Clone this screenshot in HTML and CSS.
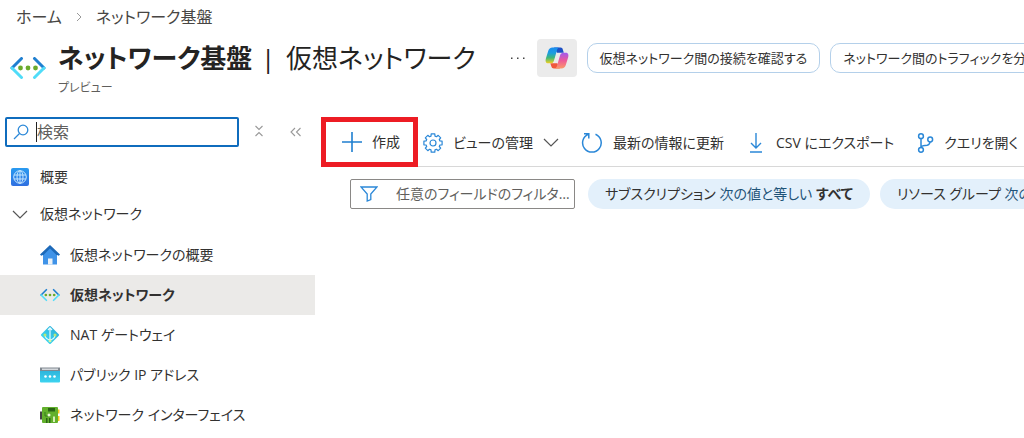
FILE: index.html
```html
<!DOCTYPE html>
<html lang="ja">

<head>
    <meta charset="UTF-8">
    <meta name="viewport" content="width=device-width, initial-scale=1.0">
    <title>ネットワーク基盤 | 仮想ネットワーク</title>
    <link rel="stylesheet" href="styles.css">
</head>

<body>

    <!-- 共通グラデーションとアイコン -->
    <svg class="defs" width="0" height="0" aria-hidden="true">
        <defs>
            <linearGradient id="g-blue" x1="0" y1="0" x2="0" y2="1">
                <stop offset="0" stop-color="#2a9bf0"/>
                <stop offset="1" stop-color="#2f6fe0"/>
            </linearGradient>
            <linearGradient id="g-cyan" x1="0" y1="0" x2="0" y2="1">
                <stop offset="0" stop-color="#2fb5dc"/>
                <stop offset="1" stop-color="#3cd4f0"/>
            </linearGradient>
            <linearGradient id="g-left" x1="0" y1="0" x2="0" y2="1">
                <stop offset="0" stop-color="#1a8df0"/>
                <stop offset="0.35" stop-color="#1b9de0"/>
                <stop offset="0.65" stop-color="#3fb878"/>
                <stop offset="1" stop-color="#f4d020"/>
            </linearGradient>
            <linearGradient id="g-right" x1="0" y1="0" x2="0" y2="1">
                <stop offset="0" stop-color="#a05af0"/>
                <stop offset="0.5" stop-color="#ee5a98"/>
                <stop offset="1" stop-color="#fb9a68"/>
            </linearGradient>
        </defs>
        <symbol id="vnet" viewBox="0 0 36 22">
            <path d="M11.5 1.5 2 11" stroke="#1f7fd0" stroke-width="3" stroke-linecap="round" fill="none"/>
            <path d="M2 11l9.5 9.5" stroke="#50dcf8" stroke-width="3" stroke-linecap="round" fill="none"/>
            <path d="M24.5 1.5 34 11" stroke="#1f7fd0" stroke-width="3" stroke-linecap="round" fill="none"/>
            <path d="M34 11l-9.5 9.5" stroke="#50dcf8" stroke-width="3" stroke-linecap="round" fill="none"/>
            <circle cx="10.5" cy="11" r="2.4" fill="#6bab2c"/>
            <circle cx="18" cy="11" r="2.4" fill="#6bab2c"/>
            <circle cx="25.5" cy="11" r="2.4" fill="#6bab2c"/>
        </symbol>
    </svg>

    <nav class="breadcrumb" aria-label="階層リンク">
        <a href="#">ホーム</a>
        <svg width="6" height="10" viewBox="0 0 6 10"><path d="M1 1l4 4-4 4" fill="none" stroke="#999" stroke-width="1"/></svg>
        <a href="#">ネットワーク基盤</a>
    </nav>

    <header class="header">
        <svg class="header-icon" width="36" height="22"><use href="#vnet"/></svg>
        <div class="header-title">
            <h1>ネットワーク基盤 <span class="bar">|</span> <span>仮想ネットワーク</span></h1>
            <p>プレビュー</p>
        </div>
        <div class="header-actions">
            <button class="more-button" aria-label="その他">
                <svg width="15" height="3" viewBox="0 0 15 3"><path d="M1 .5h1.5V2H1zM7 .5h1.5V2H7zM13 .5h1.5V2H13z" fill="#444"/></svg>
            </button>
            <button class="copilot-button" aria-label="Copilot">
                <svg width="24" height="22" viewBox="0 0 24 22">
                    <path d="M9 .5h6.5c1.500 0 2 .8 2.400 2.200l.9 3H12z" fill="#1d4fc4"/>
                    <path d="M15 21.500H9c-1.500 0-2.300-.8-2.700-2.200l-1-3h7z" fill="#f0583c"/>
                    <path d="M7.500.5h6.800c-1.400.3-1.900 1.300-2.400 3L9 13.500c-.6 2-1.500 2.800-3.300 2.800H3.200C.6 16.300.2 14 .9 11.500L3.200 4C3.900 1.700 5.300.5 7.500.5z" fill="url(#g-left)"/>
                    <path d="M16.500 21.500H9.700c1.400-.3 1.900-1.300 2.400-3l2.900-10c.6-2 1.500-2.800 3.300-2.800h2.500c2.600 0 3 2.300 2.300 4.800L20.800 18c-.7 2.300-2.100 3.500-4.300 3.500z" fill="url(#g-right)"/>
                </svg>
            </button>
            <button class="suggestion">仮想ネットワーク間の接続を確認する</button>
            <button class="suggestion">ネットワーク間のトラフィックを分析する</button>
        </div>
    </header>

    <div class="layout">
        <aside class="sidebar">
            <div class="search-row">
                <label class="search-box">
                    <svg width="16" height="16" viewBox="0 0 16 16"><circle cx="10" cy="6" r="4.8" fill="none" stroke="#2b88d8" stroke-width="1.3"/><path d="M6.5 9.5 1 15" stroke="#2b88d8" stroke-width="1.3"/></svg>
                    <span class="caret"></span>
                    <input type="text" placeholder="検索" aria-label="検索">
                </label>
                <button aria-label="すべて展開">
                    <svg width="10" height="12" viewBox="0 0 10 12"><path d="M1.5 1 5 4.5 8.5 1M1.5 11 5 7.5 8.5 11" fill="none" stroke="#999" stroke-width="1.1"/></svg>
                </button>
                <button aria-label="折りたたむ">
                    <svg width="12" height="10" viewBox="0 0 12 10"><path d="M5 1 1 5l4 4M10.5 1l-4 4 4 4" fill="none" stroke="#999" stroke-width="1.1"/></svg>
                </button>
            </div>

            <nav class="menu" aria-label="メニュー">
                <a class="menu-item" href="#">
                    <svg width="20" height="20" viewBox="0 0 20 20">
                        <rect x="1" y="1" width="18" height="18" rx="2" fill="url(#g-blue)"/>
                        <g fill="none" stroke="#c4e6ff" stroke-width="1"><circle cx="10" cy="10" r="6.3"/><ellipse cx="10" cy="10" rx="3" ry="6.3"/><path d="M10 3.7v12.6M4 8h12M4 12h12"/></g>
                    </svg>
                    概要
                </a>
                <button class="menu-item">
                    <svg width="20" height="20" viewBox="0 0 20 20"><path d="M3 7l7 7 7-7" fill="none" stroke="#555" stroke-width="1.2"/></svg>
                    仮想ネットワーク
                </button>
                <div class="submenu">
                    <a class="menu-item" href="#">
                        <svg width="20" height="20" viewBox="0 0 20 20"><path d="M3 9h14v10.5H3z" fill="#3f93e8"/><path d="M10 0 0 9.5l1.2 1.2L3 10h14l1.8.7L20 9.5z" fill="#1d69b8"/><path d="M10 3.5 3.5 10h13z" fill="#3f93e8"/><path d="M8 13.5h4.5v6H8z" fill="#eef2f6"/></svg>
                        仮想ネットワークの概要
                    </a>
                    <a class="menu-item selected" href="#">
                        <svg width="20" height="20"><use href="#vnet"/></svg>
                        仮想ネットワーク
                    </a>
                    <a class="menu-item" href="#">
                        <svg width="20" height="20" viewBox="0 0 20 20">
                            <rect x="3.3" y="3.3" width="13.4" height="13.4" rx="1" transform="rotate(45 10 10)" fill="url(#g-cyan)"/>
                            <path d="M10 3v12M8 5l2-2.2L12 5M5 10.5c.5 3 2.5 4 5 4.5 2.5-.5 4.5-1.5 5-4.5" fill="none" stroke="#e8fbff" stroke-width="1.2"/>
                            <circle cx="5" cy="10" r="1.5" fill="#b8e878"/><circle cx="15" cy="10" r="1.5" fill="#b8e878"/><circle cx="10" cy="15.8" r="1.5" fill="#d8f4a0"/>
                        </svg>
                        NAT ゲートウェイ
                    </a>
                    <a class="menu-item" href="#">
                        <svg width="20" height="20" viewBox="0 0 20 20"><path d="M0 6h20v10.5q0 1-1 1H1q-1 0-1-1z" fill="url(#g-cyan)"/><path d="M0 2.5h20V6H0z" fill="#808890"/><path d="M2 3.5h16V5H2z" fill="#d4d8dc"/><circle cx="5.5" cy="11.5" r="1.3" fill="#fff"/><circle cx="10" cy="11.5" r="1.3" fill="#fff"/><circle cx="14.5" cy="11.5" r="1.3" fill="#fff"/></svg>
                        パブリック IP アドレス
                    </a>
                    <a class="menu-item" href="#">
                        <svg width="20" height="20" viewBox="0 0 20 20"><path d="M0 6.5h3v8H0z" fill="#454545"/><path d="M17 4.5h2.5v4H17zM17 11h2.5v5H17z" fill="#f6c918"/><rect x="2" y="2" width="16" height="16" rx="1" fill="#62b02c"/><path d="M8 3h7v3.5H8zM6 13h1.5v5H6zM9 13h1.5v5H9z" fill="#2a6414"/><path d="M13 11.5h2V17h-2z" fill="#d8f0b8"/><path d="M5 7v4h5" stroke="#357a1c" stroke-width="1" fill="none"/><circle cx="9" cy="10" r="1.5" fill="#eefad8"/></svg>
                        ネットワーク インターフェイス
                    </a>
                </div>
            </nav>
        </aside>

        <main class="content">
            <div class="toolbar">
                <button class="create-button">
                    <svg width="20" height="20" viewBox="0 0 20 20"><path d="M10 0v20M0 10h20" stroke="#1f7fd0" stroke-width="1.6"/></svg>
                    作成
                </button>
                <button>
                    <svg width="20" height="20" viewBox="0 0 20 20"><path d="M8 3.1 8.200.9h3.600l.2 2.200 1.500.6 1.700-1.400 2.500 2.500-1.400 1.700.6 1.500 2.200.2v3.600l-2.200.2-.6 1.500 1.400 1.700-2.500 2.500-1.700-1.400-1.500.6-.2 2.200H8.200L8 16.900l-1.500-.6-1.700 1.400-2.500-2.500 1.400-1.700-.6-1.500-2.200-.2V8.200L3.100 8l.6-1.500-1.400-1.700 2.500-2.500 1.700 1.400z" fill="none" stroke="#2b88d8" stroke-width="1.2" stroke-linejoin="round"/><circle cx="10" cy="10" r="3" fill="none" stroke="#2b88d8" stroke-width="1.2"/></svg>
                    ビューの管理
                    <svg width="16" height="10" viewBox="0 0 16 10"><path d="M1 1l7 7 7-7" fill="none" stroke="#555" stroke-width="1.2"/></svg>
                </button>
                <button>
                    <svg width="22" height="22" viewBox="0 0 22 22"><path d="M14.5 2.2A9.3 9.3 0 1 1 7.3 2.2M3 1.8h4.8v4.8" fill="none" stroke="#2b88d8" stroke-width="1.5"/></svg>
                    最新の情報に更新
                </button>
                <button>
                    <svg width="20" height="20" viewBox="0 0 20 20"><path d="M10 0v15M5 10l5 5 5-5M4 19h12" fill="none" stroke="#2b88d8" stroke-width="1.4"/></svg>
                    CSV にエクスポート
                </button>
                <button>
                    <svg width="18" height="20" viewBox="0 0 18 20"><g fill="none" stroke="#2b88d8" stroke-width="1.5"><circle cx="5" cy="3.2" r="2.4"/><circle cx="5" cy="16.8" r="2.4"/><circle cx="14.2" cy="6.5" r="2.4"/><path d="M5 5.6v8.8M14 9c-.3 3-2 3.500-5 3.500-2 0-3.500.5-4 2"/></g></svg>
                    クエリを開く
                </button>
            </div>

            <div class="filters">
                <label class="filter-box">
                    <svg width="18" height="16" viewBox="0 0 18 16"><path d="M1 1h16l-6.2 7v5.5L7.2 15V8z" fill="none" stroke="#2b88d8" stroke-width="1.3"/></svg>
                    <input type="text" placeholder="任意のフィールドのフィルター処理" aria-label="フィルター">
                </label>
                <button class="pill">サブスクリプション <span>次の値と等しい</span> <b>すべて</b></button>
                <button class="pill">リソース グループ <span>次の値と等しい</span> <b>すべて</b></button>
            </div>
        </main>
    </div>

</body>

</html>
```

FILE: styles.css
```css
body {
    margin: 0;
    overflow: hidden;
    background-color: #fff;
    color: #323130;
    font-family: "Open Sans", "Noto Sans CJK JP", sans-serif;
    font-size: 14px;
    line-height: 20px;
    font-feature-settings: "palt";
    white-space: nowrap;
}

button, input {
    font: inherit;
    font-feature-settings: inherit;
    color: inherit;
}

button {
    padding: 0;
    border: none;
    background: none;
    white-space: nowrap;
    cursor: pointer;
}

a {
    color: inherit;
    text-decoration: none;
}

svg {
    flex: none;
}

.defs {
    position: absolute;
}

/* パンくず */
.breadcrumb {
    display: flex;
    align-items: center;
    gap: 14px;
    padding: 6px 16px 0;
    height: 22px;
    font-size: 16px;
    color: #484644;
}

/* ヘッダー */
.header {
    display: flex;
    overflow: hidden;
    padding: 10px 0 0 10px;
}

.header-icon {
    margin: 19px 12px 0 0;
}

.header-title h1 {
    margin: 0;
    font-size: 26px;
    font-weight: 700;
    line-height: 40px;
    color: #242322;
}

.header-title h1 span {
    font-weight: 400;
}

.header-title .bar {
    margin: 0 4px 0 2px;
}

.header-title p {
    margin: 0;
    font-size: 12px;
    color: #605e5c;
}

.header-actions {
    display: flex;
    align-items: center;
    height: 40px;
    gap: 10px;
    margin-left: 34px;
}

.more-button {
    display: flex;
    padding: 4px 0;
    margin-right: 2px;
}

.copilot-button {
    display: flex;
    align-items: center;
    justify-content: center;
    width: 40px;
    height: 38px;
    border-radius: 4px;
    background-color: #ebebeb;
}

.suggestion {
    height: 30px;
    padding: 0 12px;
    border: 1px solid #b4d0ea;
    border-radius: 10px;
    background-color: #fff;
    font-size: 13px;
}

.layout {
    display: flex;
    margin-top: 19px;
}

/* サイドバー */
.sidebar {
    flex: none;
    width: 315px;
}

.search-row {
    display: flex;
    align-items: center;
    gap: 26px;
    padding-left: 5px;
    color: #605e5c;
}

.search-box {
    display: flex;
    align-items: center;
    box-sizing: border-box;
    width: 234px;
    height: 30px;
    padding-left: 6px;
    border: 2px solid #0f6cbd;
    border-radius: 2px;
    margin-right: -11px;
}

.search-box input {
    flex: 1;
    min-width: 0;
    padding: 0;
    border: none;
    outline: none;
    background: none;
    font-size: 16px;
}

.caret {
    width: 1px;
    height: 20px;
    margin-left: 7px;
    background-color: #222;
}

input::placeholder {
    color: #605e5c;
    opacity: 1;
}

.menu {
    padding-top: 11px;
}

.menu-item {
    display: flex;
    align-items: center;
    gap: 10px;
    width: 100%;
    height: 37px;
    padding-left: 10px;
    box-sizing: border-box;
}

.submenu {
    padding-top: 3px;
}

.submenu .menu-item {
    height: 40px;
    padding-left: 40px;
}

.submenu .selected {
    background-color: #ebeae8;
    font-weight: 700;
}

/* コマンド バー */
.content {
    flex: 1;
    min-width: 0;
    padding-left: 6px;
}

.toolbar {
    display: flex;
    gap: 22px;
    height: 49px;
    border-bottom: 1px solid #d8d8d8;
}

.toolbar button {
    display: flex;
    align-items: center;
    gap: 10px;
    height: 52px;
}

.toolbar .create-button {
    box-sizing: border-box;
    height: 50px;
    padding: 0 13px 0 16px;
    border: 5px solid #ed1c24;
    margin-right: -17px;
    background-color: #fff;
}

.filters {
    display: flex;
    gap: 10px;
    overflow: hidden;
    padding: 12px 0 0 29px;
}

.filter-box {
    display: flex;
    flex: none;
    align-items: center;
    gap: 18px;
    box-sizing: border-box;
    width: 225px;
    height: 30px;
    padding: 0 0 0 9px;
    border: 1px solid #8a8886;
    border-radius: 2px;
    margin-right: 3px;
}

.filter-box input {
    flex: 1;
    min-width: 0;
    padding: 0;
    border: none;
    outline: none;
    background: none;
    text-overflow: ellipsis;
}

.pill {
    height: 30px;
    padding: 0 17px;
    border-radius: 15px;
    background-color: #e3f0fb;
}

.pill span {
    color: #1f5478;
}
```
